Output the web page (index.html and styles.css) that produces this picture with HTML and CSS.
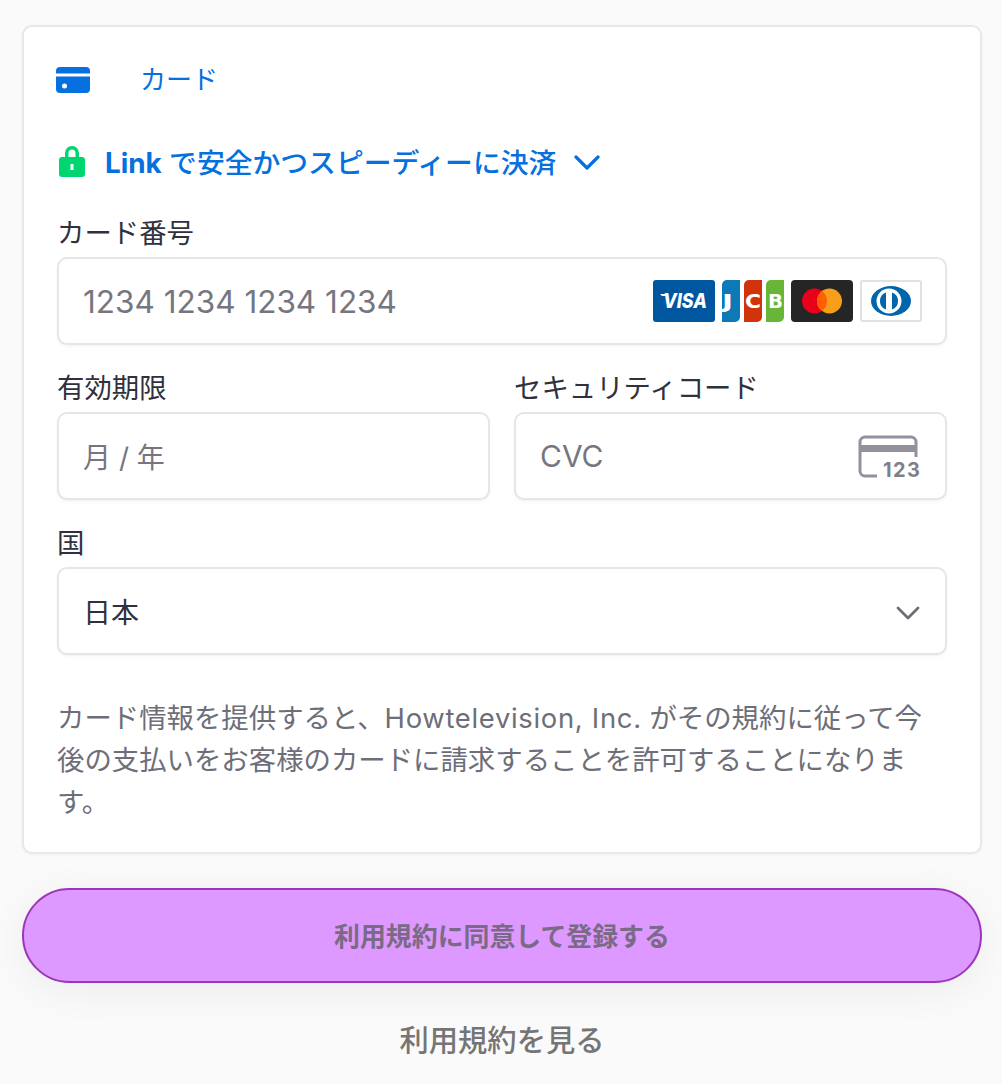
FILE: index.html
```html
<!DOCTYPE html>
<html lang="ja">
<head>
<meta charset="utf-8">
<title>カード</title>
<link rel="stylesheet" href="styles.css">
</head>
<body>
<main class="page">
  <section class="card">
    <div class="tab">
      <svg class="tab-icon" viewBox="0 0 34 26"><path fill="#0570de" d="M0 6.500V4a4 4 0 0 1 4-4h26a4 4 0 0 1 4 4v2.500zM0 9.500h34V22a4 4 0 0 1-4 4H4a4 4 0 0 1-4-4z"/><circle cx="8.500" cy="19" r="2.500" fill="#fff"/></svg>
      <span class="tab-label">カード</span>
    </div>
    <div class="link-row">
      <svg class="lock" viewBox="0 0 26 32"><path fill="#00d66f" d="M6 13V8a7 7 0 0 1 14 0v5h-3.500V8a3.500 3.500 0 0 0-7 0v5z"/><path fill="#00d66f" fill-rule="evenodd" d="M3 12h20a3 3 0 0 1 3 3v14a3 3 0 0 1-3 3H3a3 3 0 0 1-3-3V15a3 3 0 0 1 3-3zm8.500 7v6h3v-6z"/></svg>
      <span class="link-text"><b>Link</b> で安全かつスピーディーに決済</span>
      <svg class="link-chevron" viewBox="0 0 26 16"><path d="M2 2l11 11L24 2" fill="none" stroke="#0570de" stroke-width="3.200" stroke-linecap="round" stroke-linejoin="round"/></svg>
    </div>
    <div class="field">
      <div class="label">カード番号</div>
      <div class="input">
        <span class="placeholder num">1234 1234 1234 1234</span>
        <div class="brands">
          <svg class="brand" width="62" height="42" viewBox="0 0 62 42"><rect width="62" height="42" rx="3" fill="#00579f"/><path d="M7 14h6l-.5 2H9z" fill="#fff"/><text x="32" y="27.500" class="visa" textLength="44" lengthAdjust="spacingAndGlyphs">VISA</text></svg>
          <svg class="brand" width="62" height="42" viewBox="0 0 62 42"><path d="M0 5a5 5 0 0 1 5-5h13v37a5 5 0 0 1-5 5H0z" fill="#0b7ab7"/><path d="M22 5a5 5 0 0 1 5-5h13v37a5 5 0 0 1-5 5H22z" fill="#d1330a"/><path d="M44 5a5 5 0 0 1 5-5h13v37a5 5 0 0 1-5 5H44z" fill="#67b637"/><text x="0" y="28" class="jcb" textLength="11" lengthAdjust="spacingAndGlyphs">J</text><text x="23" y="28" class="jcb" textLength="16" lengthAdjust="spacingAndGlyphs">C</text><text x="46" y="28" class="jcb" textLength="15" lengthAdjust="spacingAndGlyphs">B</text></svg>
          <svg class="brand" width="62" height="42" viewBox="0 0 62 42"><rect width="62" height="42" rx="4" fill="#252525"/><circle cx="23.500" cy="21" r="12.500" fill="#eb001b"/><circle cx="38.500" cy="21" r="12.500" fill="#f79e1b"/><path d="M31 11a12.500 12.500 0 0 1 0 20 12.500 12.500 0 0 1 0-20z" fill="#ff5f00"/></svg>
          <svg class="brand" width="62" height="42" viewBox="0 0 62 42"><rect x="1" y="1" width="60" height="40" rx="2" fill="#fff" stroke="#e1e1e1" stroke-width="2"/><ellipse cx="31" cy="21" rx="20" ry="15" fill="#0165ac"/><circle cx="29" cy="21" r="12.500" fill="#fff"/><path d="M26 12.500a9 9 0 0 0 0 17zM32 12.500a9 9 0 0 1 0 17z" fill="#0165ac"/></svg>
        </div>
      </div>
    </div>
    <div class="row">
      <div class="field">
        <div class="label">有効期限</div>
        <div class="input"><span class="placeholder cjk">月 / 年</span></div>
      </div>
      <div class="field">
        <div class="label">セキュリティコード</div>
        <div class="input">
          <span class="placeholder">CVC</span>
          <svg class="cvc" viewBox="0 0 64 48"><path d="M19 41H7a5 5 0 0 1-5-5V7a5 5 0 0 1 5-5h46a5 5 0 0 1 5 5v15" fill="none" stroke="#92929d" stroke-width="3"/><rect x="2" y="10" width="56" height="7" fill="#92929d"/><text x="25" y="42" class="cvc-num" textLength="37" lengthAdjust="spacing">123</text></svg>
        </div>
      </div>
    </div>
    <div class="field">
      <div class="label">国</div>
      <div class="input select">
        <span class="value">日本</span>
        <svg class="select-chevron" viewBox="0 0 24 14"><path d="M2 2l10 10L22 2" fill="none" stroke="#6d6e78" stroke-width="2.800" stroke-linecap="round" stroke-linejoin="round"/></svg>
      </div>
    </div>
    <p class="terms">カード情報を提供すると、<span class="latin">Howtelevision, Inc.</span> がその規約に従って今後の支払いをお客様のカードに請求することを許可することになります。</p>
  </section>
  <button class="submit" type="button">利用規約に同意して登録する</button>
  <div class="view-terms">利用規約を見る</div>
</main>
</body>
</html>
```
FILE: styles.css
```css
* { box-sizing: border-box; }
html, body { margin: 0; height: 1084px; overflow: hidden; }
body {
  background: #fafafa;
  font-family: Inter, "Noto Sans CJK JP", sans-serif;
  color: #30313d;
}
.page { padding: 25px 20px 0 22px; }
.card {
  height: 829px;
  background: #fff;
  border: 2px solid #e8e8e8;
  border-radius: 10px;
  box-shadow: 0 1px 3px rgba(0,0,0,.04);
  padding: 0 33px;
}
.tab { display: flex; align-items: center; height: 104px; padding-top: 1px; margin-left: -1px; }
.tab-icon { width: 34px; height: 26px; }
.tab-label { margin-left: 50px; padding-top: 1px; font-size: 26px; line-height: 32px; color: #0570de; }
.link-row { display: flex; align-items: center; height: 32px; margin: 14px 0 13px 2px; }
.lock { width: 26px; height: 32px; }
.link-text { margin-left: 20px; font-size: 27.800px; font-weight: 500; color: #0570de; white-space: nowrap; }
.link-text b { font-weight: 700; }
.link-chevron { width: 26px; height: 16px; margin: 3px 0 0 18px; }
.field { display: flex; flex-direction: column; flex: 1; min-width: 0; }
.label { height: 32px; margin-top: 27px; font-size: 27.400px; line-height: 32px; color: #30313d; white-space: nowrap; }
.input {
  display: flex; align-items: center; justify-content: space-between;
  height: 88px; margin-top: 8px; padding: 0 23px 0 24px;
  background: #fff;
  border: 2px solid #e6e6e6;
  border-radius: 10px;
  box-shadow: 0 1px 2px rgba(0,0,0,.04), 0 3px 6px rgba(0,0,0,.02);
}
.placeholder { font-size: 30px; color: #757680; white-space: nowrap; }
.placeholder.num { font-size: 31.500px; }
.placeholder.cjk { font-size: 28px; }
.brands { display: flex; gap: 7px; }
.brand { display: block; }
.visa { fill: #fff; font: italic 800 20px Inter, sans-serif; text-anchor: middle; }
.jcb { fill: #fff; font: 700 20px "DejaVu Sans", sans-serif; }
.row { display: flex; gap: 24px; }
.cvc { width: 64px; height: 48px; margin-top: 5px; }
.cvc-num { fill: #7f7f8a; font: 700 20px Inter, sans-serif; }
.value { font-size: 28px; color: #30313d; }
.select-chevron { width: 24px; height: 14px; margin: 3px 2px 0 0; }
.terms { margin: 42px 10px 0 0; font-size: 27.400px; line-height: 42px; color: #6d6e78; }
.latin { letter-spacing: .7px; }
.submit {
  display: block; width: 100%; height: 95px; margin-top: 34px; padding: 0 0 2px;
  background: #dd99ff;
  border: 2px solid #9b36bb;
  border-radius: 48px;
  box-shadow: 0 8px 40px rgba(0,0,0,.06);
  font: 700 25.900px Inter, "Noto Sans CJK JP", sans-serif;
  color: #7a6a85;
}
.view-terms { margin-top: 40px; text-align: center; font-size: 29.300px; font-weight: 500; line-height: 36px; color: #757575; }
```
